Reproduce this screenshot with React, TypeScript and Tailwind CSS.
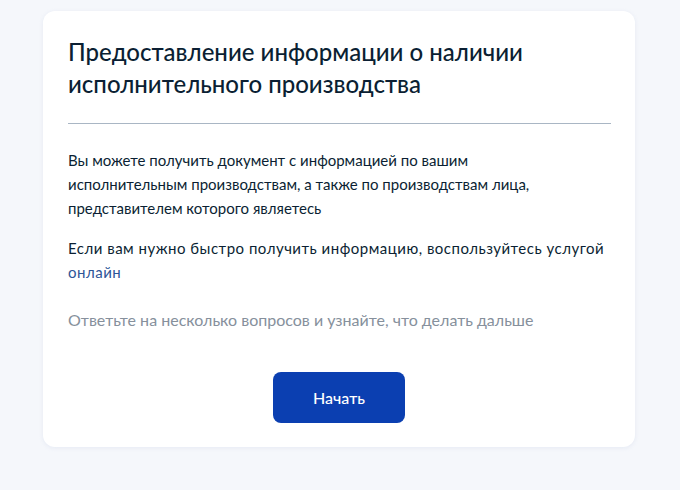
import React from 'react';

const App = () => {
  return (
    <div className="min-h-[490px] bg-[#f5f7fb] pt-[11px] pl-[43px] font-['Lato','Noto_Sans',sans-serif]">
      <div className="w-[592px] rounded-xl bg-white px-[25px] pt-[25px] pb-[24px] shadow-[0_1px_4px_rgba(210,218,235,0.45)]">
        <h1 className="text-[24px] leading-[32px] font-medium text-[#0b1f33]">
          Предоставление информации о наличии исполнительного производства
        </h1>
        <div className="mt-[23px] h-px w-[543px] bg-[#a9b6c4]" />
        <p className="mt-[24px] w-[470px] text-[15px] leading-[24px] text-[#0b1f33]">
          Вы можете получить документ с информацией по вашим исполнительным производствам, а также по производствам лица, представителем которого являетесь
        </p>
        <p className="mt-[16px] text-[15px] leading-[24px] tracking-[0.5px] text-[#0b1f33]">
          Если вам нужно быстро получить информацию, воспользуйтесь услугой{' '}
          <a href="#" className="text-[#2d5597]">онлайн</a>
        </p>
        <p className="mt-[24px] text-[16px] leading-[24px] text-[#86909c]">
          Ответьте на несколько вопросов и узнайте, что делать дальше
        </p>
        <div className="mt-[40px] flex justify-center">
          <button className="h-[51px] w-[132px] rounded-lg bg-[#0b3fb1] text-[16px] font-medium text-white">
            Начать
          </button>
        </div>
      </div>
    </div>
  );
};

export default App;
